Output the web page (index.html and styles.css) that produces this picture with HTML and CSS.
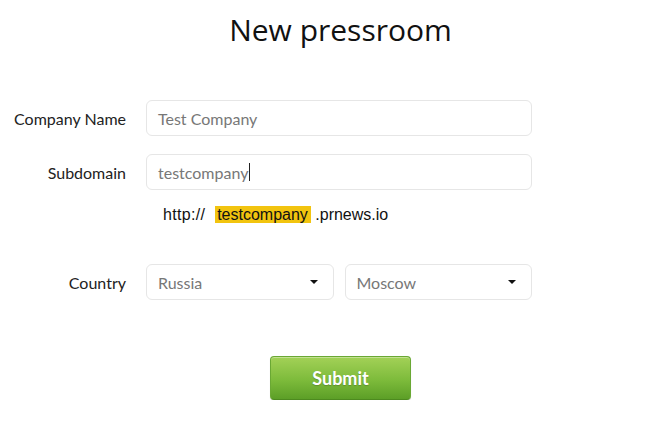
FILE: index.html
```html
<!DOCTYPE html>
<html>
<head>
<meta charset="utf-8">
<link rel="stylesheet" href="styles.css">
</head>
<body>
<div class="page">
  <h1 class="title">New pressroom</h1>
  <form class="form">
    <div class="row">
      <label class="label">Company Name</label>
      <div class="field"><div class="input">Test Company</div></div>
    </div>
    <div class="row">
      <label class="label">Subdomain</label>
      <div class="field"><div class="input">testcompany<span class="caret"></span></div></div>
    </div>
    <div class="row url-row">
      <div class="label"></div>
      <div class="url"><span class="proto">http://</span><span class="hl">testcompany</span> .prnews.io</div>
    </div>
    <div class="row country-row">
      <label class="label">Country</label>
      <div class="field selects">
        <div class="input select">Russia<span class="arrow"></span></div>
        <div class="input select">Moscow<span class="arrow"></span></div>
      </div>
    </div>
    <div class="actions">
      <button type="button" class="submit">Submit</button>
    </div>
  </form>
</div>
</body>
</html>
```

FILE: styles.css
```css
html, body {
  margin: 0;
  padding: 0;
  background: #ffffff;
}
.page {
  width: 656px;
  font-family: "Lato", "Open Sans", sans-serif;
}
.title {
  margin: 10px 0 0 0;
  padding-left: 25px;
  text-align: center;
  font-family: "Open Sans", sans-serif;
  font-weight: 400;
  font-size: 30px;
  line-height: 40px;
  color: #111;
}
.form {
  margin-top: 50px;
  display: flex;
  flex-direction: column;
}
.row {
  display: flex;
  align-items: center;
  gap: 20px;
  margin-bottom: 18px;
}
.label {
  width: 126px;
  text-align: right;
  font-size: 16px;
  color: #222;
}
.field {
  width: 386px;
}
.input {
  box-sizing: border-box;
  height: 36px;
  border: 1px solid #e6e6e6;
  border-radius: 6px;
  padding: 0 11px;
  display: flex;
  align-items: center;
  font-size: 16px;
  color: #777;
  background: #fff;
}
.caret {
  display: inline-block;
  width: 1px;
  height: 18px;
  background: #222;
  margin-left: 1px;
}
.url-row {
  margin-top: -2px;
  margin-bottom: 40px;
}
.url {
  padding-left: 17px;
  font-family: "Liberation Sans", Arial, sans-serif;
  font-size: 16px;
  line-height: 18px;
  color: #111;
}
.proto {
  letter-spacing: 0.3px;
}
.hl {
  background: #f2c40f;
  padding: 0 3px 0 2px;
  margin-left: 10px;
}
.selects {
  display: flex;
  gap: 11px;
}
.select {
  flex: 1;
  justify-content: space-between;
}
.arrow {
  width: 0;
  height: 0;
  border-left: 4px solid transparent;
  border-right: 4px solid transparent;
  border-top: 4px solid #111;
  margin-right: 4px;
}
.country-row {
  margin-bottom: 56px;
}
.actions {
  display: flex;
  justify-content: flex-start;
  padding-left: 270px;
}
.submit {
  width: 141px;
  height: 44px;
  border: 1px solid #6aa834;
  border-bottom-color: #4d8a1f;
  border-radius: 4px;
  background: linear-gradient(#a3d157, #7dbb3b 55%, #5c9f27);
  box-shadow: inset 0 1px 0 rgba(255,255,255,0.35), 0 1px 1px rgba(0,0,0,0.15);
  color: #fff;
  font-family: "Lato", "Open Sans", sans-serif;
  font-weight: 700;
  font-size: 18px;
  text-shadow: 0 1px 1px rgba(0,0,0,0.2);
  cursor: pointer;
}
```
